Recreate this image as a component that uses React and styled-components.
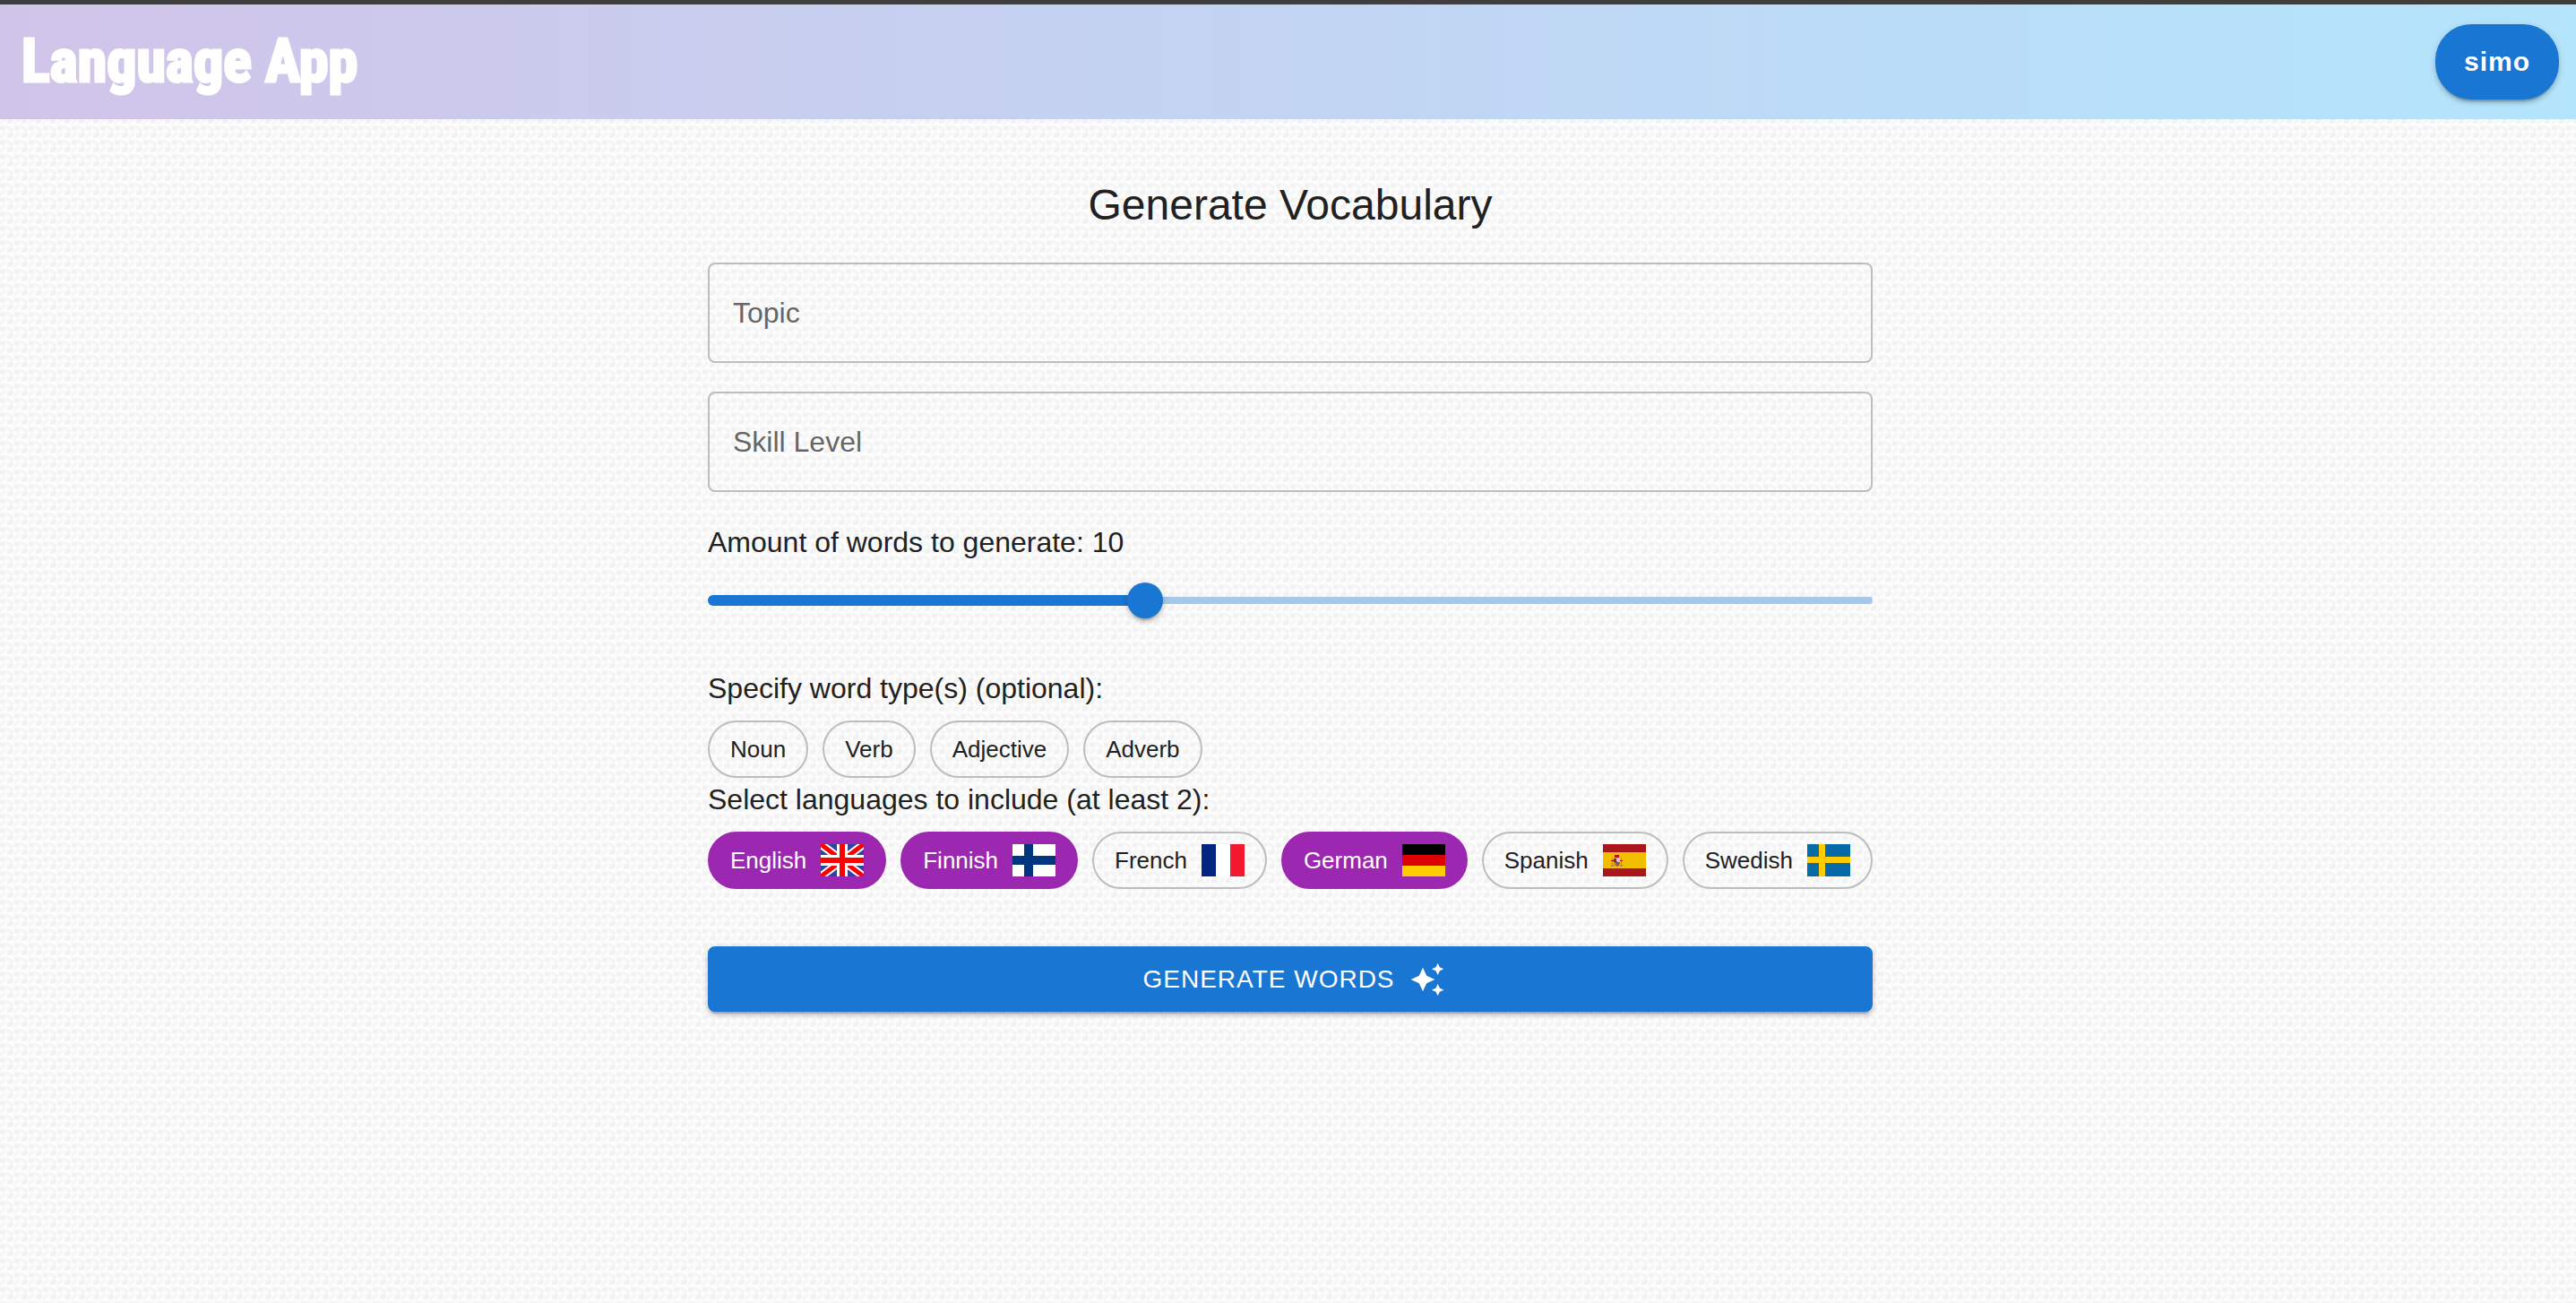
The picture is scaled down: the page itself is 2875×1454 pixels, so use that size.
import React, { useState } from "react";
import styled, { createGlobalStyle } from "styled-components";

const knit = encodeURIComponent(
  `<svg xmlns="http://www.w3.org/2000/svg" width="16" height="16"><rect width="16" height="16" fill="#fcfcfc"/><g fill="none" stroke="#f5f5f5" stroke-width="3"><path d="M8 1L14 6M0 14L6 8"/></g><path fill="#f2f2f2" d="M0 0L3 1L6 0L7 3L3 7L0 4ZM8 14L8 10L12 7L15 9L14 14L11 13Z"/></svg>`
);

const GlobalStyle = createGlobalStyle`
  *, *::before, *::after { box-sizing: border-box; }
  body {
    margin: 0;
    min-height: 100vh;
    color: #212121;
    font-family: "Liberation Sans", Arial, sans-serif;
    background: #fafafa url("data:image/svg+xml,${knit}") 0 12px;
  }
  button, input { font: inherit; }
`;

const raised = "0 6px 2px -4px rgba(0,0,0,.2), 0 4px 4px rgba(0,0,0,.14), 0 2px 10px rgba(0,0,0,.12)";

const Header = styled.header`
  display: flex;
  align-items: center;
  justify-content: space-between;
  height: 133px;
  padding: 0 19px 0 24px;
  border-top: 5px solid #3e3e3e;
  background: linear-gradient(90deg, #d1c4e9, #b3e5fc);
`;

const Brand = styled.a`
  color: #fff;
  font: bold 66px/80px Impact, "Roboto Condensed", "Liberation Sans", sans-serif;
  text-decoration: none;
  -webkit-text-stroke: 3px #fff;
`;

const UserButton = styled.button`
  height: 84px;
  padding: 0 32px;
  border: 0;
  border-radius: 40px;
  color: #fff;
  background: #1976d2;
  box-shadow: ${raised};
  font-size: 30px;
  font-weight: bold;
  letter-spacing: 1px;
`;

const Main = styled.main`
  display: flex;
  justify-content: center;
  padding: 64px 0 64px 5px;
`;

const Form = styled.form`
  display: flex;
  flex-direction: column;
  width: 100%;
  max-width: 1300px;
`;

const Title = styled.h1`
  margin: 0 0 32px;
  font-size: 48px;
  font-weight: 400;
  line-height: 64px;
  text-align: center;
`;

const FieldBox = styled.div`
  display: grid;
  align-items: center;
  height: 112px;
  margin-bottom: 32px;
  border: 2px solid #bdbdbd;
  border-radius: 8px;
  font-size: 32px;
  > * { grid-area: 1 / 1; }
`;

const FieldLabel = styled.label`
  padding: 0 26px;
  color: #666;
  pointer-events: none;
`;

const FieldInput = styled.input`
  width: 100%;
  height: 100%;
  padding: 0 26px;
  border: 0;
  outline: 0;
  background: transparent;
  &:not(:placeholder-shown) + label { visibility: hidden; }
`;

const Caption = styled.div`
  font-size: 32px;
  line-height: 48px;
`;

const Rail = styled.div`
  height: 12px;
  margin: 35px 0 68px;
  border-radius: 6px;
  background:
    linear-gradient(#1976d2, #1976d2) left center / var(--filled) 12px no-repeat,
    linear-gradient(#a6c8eb, #a6c8eb) left center / 100% 8px no-repeat;
`;

const Range = styled.input`
  display: block;
  width: calc(100% + 40px);
  height: 40px;
  margin: 0 -20px;
  appearance: none;
  background: transparent;
  transform: translateY(-14px);
  &::-webkit-slider-thumb {
    appearance: none;
    width: 40px;
    height: 40px;
    border-radius: 50%;
    background: #1976d2;
    box-shadow: ${raised};
  }
`;

const ChipRow = styled.div`
  display: flex;
  flex-wrap: wrap;
  justify-content: ${(p) => (p.$spread ? "space-between" : "flex-start")};
  gap: 12px ${(p) => (p.$spread ? "12px" : "16px")};
  margin-top: 12px;
`;

const ChipButton = styled.button`
  display: flex;
  align-items: center;
  gap: 16px;
  height: 64px;
  padding: 0 23px;
  border: 2px solid ${(p) => (p.$on ? "#9c27b0" : "#bdbdbd")};
  border-radius: 32px;
  color: ${(p) => (p.$on ? "#fff" : "#212121")};
  background: ${(p) => (p.$on ? "#9c27b0" : "transparent")};
  font-size: 26px;
`;

const FlagArt = styled.svg`
  display: block;
  width: 48px;
  height: 36px;
`;

const Submit = styled.button`
  display: flex;
  align-items: center;
  justify-content: center;
  gap: 16px;
  height: 73px;
  margin-top: 64px;
  border: 0;
  border-radius: 8px;
  color: #fff;
  background: #1976d2;
  box-shadow: ${raised};
  font-size: 28px;
  letter-spacing: 1px;
  text-transform: uppercase;
`;

const SparkleArt = styled.svg`
  width: 40px;
  height: 40px;
  margin-right: -8px;
  fill: currentColor;
`;

const flags = {
  English: (
    <>
      <path fill="#2e42a5" d="M0 0h48v36H0z" />
      <path stroke="#fff" strokeWidth="9" d="M0 0l48 36M48 0L0 36" />
      <path stroke="#f00" strokeWidth="5" d="M0 0l48 36M48 0L0 36" />
      <path fill="#fff" d="M18 0h12v36H18zM0 12h48v12H0z" />
      <path fill="#f00" d="M21 0h6v36h-6zM0 15h48v6H0z" />
    </>
  ),
  Finnish: (
    <>
      <path fill="#fff" d="M0 0h48v36H0z" />
      <path fill="#003580" d="M13 0h10v36H13zM0 13h48v10H0z" />
    </>
  ),
  French: (
    <>
      <path fill="#fff" d="M0 0h48v36H0z" />
      <path fill="#00267f" d="M0 0h16v36H0z" />
      <path fill="#f31830" d="M32 0h16v36H32z" />
    </>
  ),
  German: (
    <>
      <path d="M0 0h48v12H0z" />
      <path fill="#d00" d="M0 12h48v12H0z" />
      <path fill="#ffce00" d="M0 24h48v12H0z" />
    </>
  ),
  Spanish: (
    <>
      <path fill="#aa151b" d="M0 0h48v36H0z" />
      <path fill="#f1bf00" d="M0 9h48v18H0z" />
      <path fill="#a88c59" d="M10 15h1v9h-1zM20 15h1v9h-1zM9 23h3v2H9zM19 23h3v2h-3z" />
      <path fill="#ad1519" d="M13 12h5v3h-5zM9 18h3v1H9zM19 18h3v1h-3zM12 16h3v4h-3z" />
      <path fill="#ccc" d="M15 16h4v4h-4z" />
      <path fill="#c8742f" d="M12 20h3v4h-2z" />
      <path fill="#9d4b4b" d="M15 20h4l-1 4-3 1z" />
      <circle cx="15" cy="20" r="1" fill="#005bbf" />
    </>
  ),
  Swedish: (
    <>
      <path fill="#066aa7" d="M0 0h48v36H0z" />
      <path fill="#fecc00" d="M13 0h7v36h-7zM0 14h48v7H0z" />
    </>
  ),
};

function Field({ id, label }) {
  return (
    <FieldBox>
      <FieldInput id={id} type="text" placeholder=" " />
      <FieldLabel htmlFor={id}>{label}</FieldLabel>
    </FieldBox>
  );
}

function Chips({ options, selected, onToggle, withFlags }) {
  return (
    <ChipRow $spread={withFlags}>
      {options.map((name) => {
        const on = selected.includes(name);
        return (
          <ChipButton key={name} type="button" $on={on} aria-pressed={on} onClick={() => onToggle(name)}>
            {name}
            {withFlags && (
              <FlagArt viewBox="0 0 48 36" aria-hidden="true">
                {flags[name]}
              </FlagArt>
            )}
          </ChipButton>
        );
      })}
    </ChipRow>
  );
}

const toggle = (list, name) => (list.includes(name) ? list.filter((n) => n !== name) : [...list, name]);

const MIN = 1;
const MAX = 25;

export default function App() {
  const [amount, setAmount] = useState(10);
  const [types, setTypes] = useState([]);
  const [languages, setLanguages] = useState(["English", "Finnish", "German"]);

  return (
    <>
      <GlobalStyle />
      <Header>
        <Brand href="#">Language App</Brand>
        <UserButton type="button">simo</UserButton>
      </Header>
      <Main>
        <Form onSubmit={(e) => e.preventDefault()}>
          <Title>Generate Vocabulary</Title>
          <Field id="topic" label="Topic" />
          <Field id="skill" label="Skill Level" />
          <Caption as="label" htmlFor="amount">
            Amount of words to generate: {amount}
          </Caption>
          <Rail style={{ "--filled": `${((amount - MIN) / (MAX - MIN)) * 100}%` }}>
            <Range
              id="amount"
              type="range"
              min={MIN}
              max={MAX}
              value={amount}
              onChange={(e) => setAmount(Number(e.target.value))}
            />
          </Rail>
          <Caption>Specify word type(s) (optional):</Caption>
          <Chips
            options={["Noun", "Verb", "Adjective", "Adverb"]}
            selected={types}
            onToggle={(n) => setTypes(toggle(types, n))}
          />
          <Caption>Select languages to include (at least 2):</Caption>
          <Chips
            withFlags
            options={Object.keys(flags)}
            selected={languages}
            onToggle={(n) => setLanguages(toggle(languages, n))}
          />
          <Submit type="submit">
            Generate words
            <SparkleArt viewBox="0 0 24 24" aria-hidden="true">
              <path d="m19 9 1.25-2.75L23 5l-2.75-1.25L19 1l-1.25 2.75L15 5l2.75 1.25L19 9zm-7.500.5L9 4 6.500 9.500 1 12l5.500 2.500L9 20l2.500-5.500L17 12l-5.500-2.500zM19 15l-1.250 2.750L15 19l2.750 1.250L19 23l1.250-2.750L23 19l-2.750-1.250L19 15z" />
            </SparkleArt>
          </Submit>
        </Form>
      </Main>
    </>
  );
}
